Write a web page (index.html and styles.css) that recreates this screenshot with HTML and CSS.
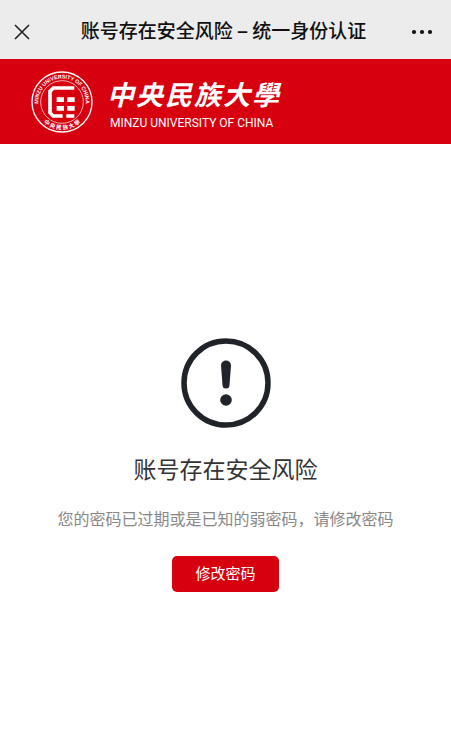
FILE: index.html
```html
<!DOCTYPE html>
<html lang="zh-CN">
<head>
<meta charset="utf-8">
<meta name="viewport" content="width=device-width, initial-scale=1">
<title>账号存在安全风险 – 统一身份认证</title>
<link rel="stylesheet" href="styles.css">
</head>
<body>
<header class="titlebar">
  <button class="icon-button" type="button" aria-label="关闭">
    <svg width="16" height="16" viewBox="0 0 16 16"><path d="M1 1L15 15M15 1L1 15" stroke="#222" stroke-width="1.6" fill="none"/></svg>
  </button>
  <div class="titlebar-text">账号存在安全风险 – 统一身份认证</div>
  <button class="icon-button icon-button-end" type="button" aria-label="更多">
    <svg width="22" height="6" viewBox="0 0 22 6" fill="#111"><circle cx="3" cy="3" r="2.100"/><circle cx="11" cy="3" r="2.100"/><circle cx="19" cy="3" r="2.100"/></svg>
  </button>
</header>
<div class="banner">
  <svg class="seal" viewBox="33 31 186 186" aria-hidden="true">
    <defs>
      <path id="arc-top" d="M63 157A71 71 0 1 1 189 157"/>
      <path id="arc-bottom" d="M48 150A82 82 0 0 0 204 150"/>
    </defs>
    <g fill="none" stroke="#fff">
      <circle cx="126" cy="124" r="90" stroke-width="4"/>
      <circle cx="126" cy="124" r="64" stroke-width="2"/>
      <path d="M163 82H100L90 92V156L99 166H128M139 166H163" stroke-width="11"/>
    </g>
    <path d="M110 110h22v14h-22zM142 110h22v14h-22zM110 136h22v14h-22zM142 136h22v14h-22z" fill="#fff"/>
    <text class="seal-latin"><textPath href="#arc-top" startOffset="50%">MINZU UNIVERSITY OF CHINA</textPath></text>
    <text class="seal-han"><textPath href="#arc-bottom" startOffset="50%">中 央 民 族 大 學</textPath></text>
  </svg>
  <div class="wordmark">
    <div class="wordmark-han"><span>中</span><span>央</span><span>民</span><span>族</span><span>大</span><span>學</span></div>
    <div class="wordmark-latin">MINZU UNIVERSITY OF CHINA</div>
  </div>
</div>
<main class="notice">
  <svg class="notice-icon" viewBox="0 0 90 90" aria-hidden="true">
    <circle cx="45" cy="45" r="42" fill="none" stroke="#20242a" stroke-width="5.500"/>
    <path d="M40 27.500a5 5 0 0 1 10 0L48.500 47a3.500 3.500 0 0 1-7 0Z" fill="#20242a"/>
    <circle cx="45" cy="62" r="5.800" fill="#20242a"/>
  </svg>
  <h1 class="notice-title">账号存在安全风险</h1>
  <p class="notice-text">您的密码已过期或是已知的弱密码，请修改密码</p>
  <button class="primary" type="button">修改密码</button>
</main>
</body>
</html>
```
FILE: styles.css
```css
* {
  box-sizing: border-box;
}

body {
  margin: 0;
  background: #fff;
  font-family: "Noto Sans CJK SC", sans-serif;
}

button {
  border: 0;
  font: inherit;
  cursor: pointer;
}

.titlebar {
  display: grid;
  grid-template-columns: 1fr auto 1fr;
  align-items: center;
  padding: 4px 18px 0 14px;
  height: 59px;
  background: #ececec;
}

.titlebar-text {
  color: #111;
  font-family: Inter, "Noto Sans CJK SC", sans-serif;
  font-size: 19px;
  font-weight: 500;
  line-height: 28px;
}

.icon-button {
  display: flex;
  justify-self: start;
  padding: 0;
  background: none;
}

.icon-button-end {
  justify-self: end;
}

.banner {
  display: flex;
  align-items: center;
  gap: 14px;
  height: 85px;
  padding: 0 31px;
  background: #d7000f;
  color: #fff;
}

.seal {
  width: 62px;
  height: 62px;
}

.seal text {
  fill: #fff;
  text-anchor: middle;
}

.seal-latin {
  font: 700 16px "Liberation Sans", sans-serif;
}

.seal-han {
  font-size: 17px;
  font-weight: 700;
}

.wordmark {
  padding-top: 4px;
}

.wordmark-han {
  display: flex;
  gap: 2px;
  font-size: 27px;
  font-style: italic;
  font-weight: 700;
  line-height: 38px;
}

.wordmark-latin {
  padding-left: 3px;
  font: 12px/20px Roboto, "Liberation Sans", sans-serif;
}

.notice {
  display: flex;
  flex-direction: column;
  align-items: center;
  padding: 194px 16px 32px;
  text-align: center;
}

.notice-icon {
  width: 90px;
  height: 90px;
}

.notice-title {
  margin: 22px 0 0;
  color: #333;
  font-size: 23px;
  font-weight: 400;
  line-height: 36px;
}

.notice-text {
  margin: 20px 0 0;
  color: #888;
  font-size: 16px;
  line-height: 24px;
}

.primary {
  margin-top: 26px;
  padding: 5px 23px 7px;
  border-radius: 5px;
  background: #d7000f;
  color: #fff;
  font-size: 15px;
  line-height: 24px;
}
```
